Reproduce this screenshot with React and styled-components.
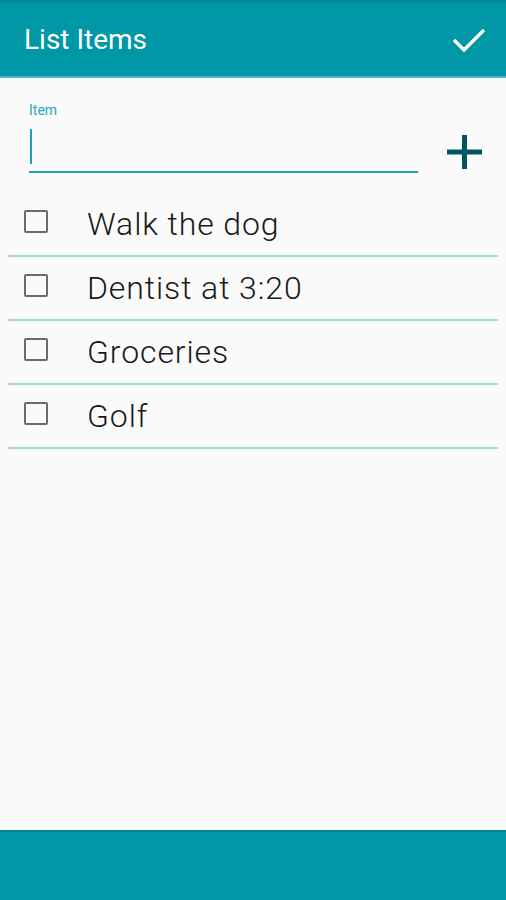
import React from 'react';
import styled, { createGlobalStyle } from 'styled-components';

const GlobalStyle = createGlobalStyle`
  html, body {
    margin: 0;
    padding: 0;
    background: #fafafa;
    font-family: Roboto, "Liberation Sans", sans-serif;
  }
`;

const Screen = styled.div`
  width: 506px;
  height: 900px;
  display: flex;
  flex-direction: column;
  background: #fafafa;
`;

const Toolbar = styled.div`
  height: 78px;
  flex-shrink: 0;
  display: flex;
  align-items: center;
  justify-content: space-between;
  padding: 0 20px 0 24px;
  box-sizing: border-box;
  background: #0097a7;
  border-top: 3px solid #008a98;
  border-bottom: 2px solid #4bbac6;
`;

const Title = styled.h1`
  margin: 0;
  font-size: 28px;
  font-weight: 400;
  color: #fff;
`;

const IconButton = styled.button`
  border: 0;
  background: none;
  padding: 0;
  display: flex;
  cursor: pointer;
`;

const Content = styled.div`
  flex: 1;
  padding: 0 8px;
`;

const InputRow = styled.div`
  display: flex;
  align-items: flex-end;
  padding: 24px 16px 0 21px;
  margin-bottom: 20px;
`;

const Field = styled.label`
  flex: 1;
  display: flex;
  flex-direction: column;
`;

const Label = styled.span`
  font-size: 14px;
  color: #26a9b8;
  line-height: 16px;
`;

const Input = styled.input`
  margin-top: 13px;
  width: 389px;
  height: 40px;
  border: 0;
  border-bottom: 2px solid #1fa3b2;
  background: transparent;
  outline: none;
  font: inherit;
  font-size: 26px;
  padding: 0;
  caret-color: #1fa3b2;
`;

const Cursor = styled.span`
  position: absolute;
  width: 2px;
  height: 35px;
  background: #1fa3b2;
  margin: 27px 0 0 1px;
`;

const AddButton = styled(IconButton)`
  margin: 0 0 3px 29px;
`;

const List = styled.ul`
  list-style: none;
  margin: 0;
  padding: 0;
`;

const Row = styled.li`
  height: 62px;
  display: flex;
  align-items: center;
  border-bottom: 2px solid #a5d7de;
`;

const Box = styled.span`
  width: 20px;
  height: 19px;
  border: 2px solid #6b6b6b;
  border-radius: 2px;
  margin: 0 39px 5px 16px;
  flex-shrink: 0;
`;

const ItemText = styled.span`
  font-size: 32px;
  font-weight: 350;
  color: #1a1a1a;
  letter-spacing: 0.9px;
`;

const BottomBar = styled.div`
  height: 70px;
  flex-shrink: 0;
  background: #0097a7;
  border-top: 2px solid #0a8593;
  box-sizing: border-box;
`;

const items = ['Walk the dog', 'Dentist at 3:20', 'Groceries', 'Golf'];

const App = () => (
  <Screen>
    <GlobalStyle />
    <Toolbar>
      <Title>List Items</Title>
      <IconButton aria-label="Done">
        <svg width="36" height="30" viewBox="0 0 36 30">
          <path d="M4 15 L14 25 L34 5" fill="none" stroke="#fff" strokeWidth="3.4" />
        </svg>
      </IconButton>
    </Toolbar>
    <Content>
      <InputRow>
        <Field>
          <Label>Item</Label>
          <Cursor />
          <Input />
        </Field>
        <AddButton aria-label="Add">
          <svg width="35" height="36" viewBox="0 0 35 36">
            <path d="M17.5 1 V35 M0 18 H35" stroke="#00555f" strokeWidth="5" />
          </svg>
        </AddButton>
      </InputRow>
      <List>
        {items.map((t) => (
          <Row key={t}>
            <Box />
            <ItemText>{t}</ItemText>
          </Row>
        ))}
      </List>
    </Content>
    <BottomBar />
  </Screen>
);

export default App;
